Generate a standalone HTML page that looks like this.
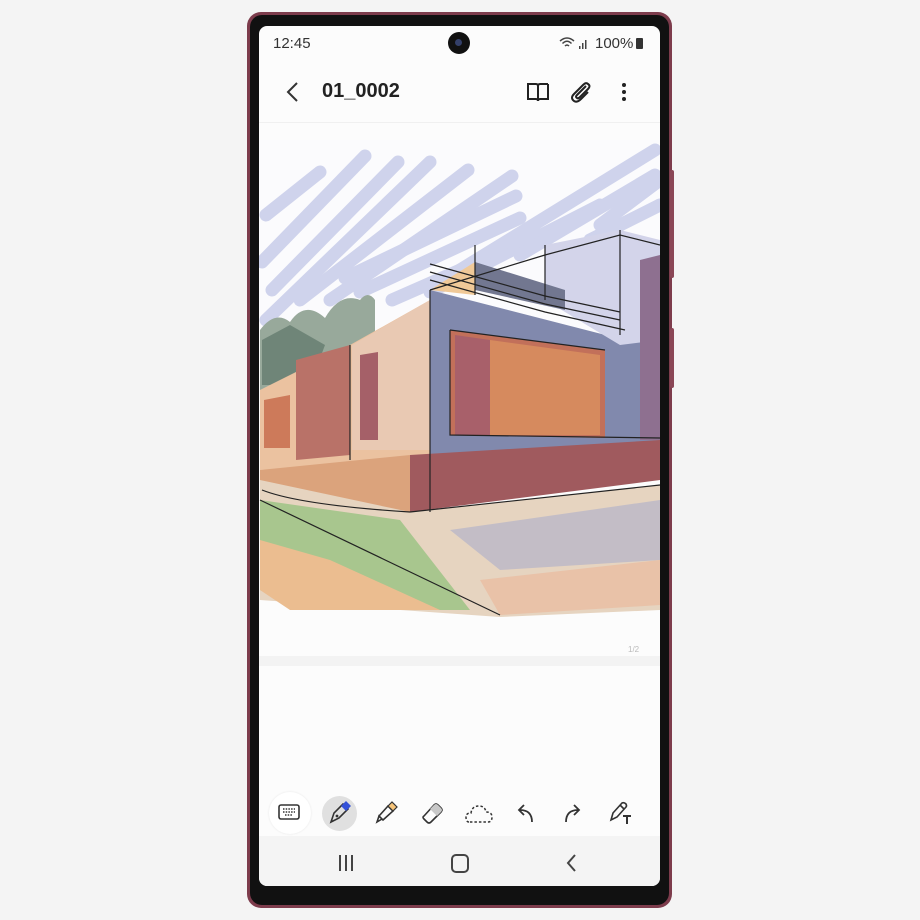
<!DOCTYPE html>
<html><head><meta charset="utf-8"><style>
html,body{margin:0;padding:0;background:#f4f4f4;width:920px;height:920px;overflow:hidden;font-family:"Liberation Sans",sans-serif}
.abs{position:absolute}
</style></head><body>
<div class="abs" style="left:247px;top:12px;width:425px;height:896px;border-radius:14px;background:#7d3c4c"></div>
<div class="abs" style="left:250px;top:15px;width:419px;height:890px;border-radius:12px;background:#111"></div>
<div class="abs" style="left:670px;top:170px;width:4px;height:108px;background:#8a4656;border-radius:2px"></div>
<div class="abs" style="left:670px;top:328px;width:4px;height:60px;background:#8a4656;border-radius:2px"></div>
<div class="abs" style="left:259px;top:26px;width:401px;height:860px;border-radius:8px;background:#fcfcfc;overflow:hidden">
  <div class="abs" style="left:14px;top:9px;font-size:15px;color:#333">12:45</div>
  <div class="abs" style="left:189px;top:6px;width:22px;height:22px;border-radius:50%;background:#111"></div>
  <div class="abs" style="left:196px;top:13px;width:7px;height:7px;border-radius:50%;background:#34406a"></div>
  <svg class="abs" style="left:300px;top:10px" width="30" height="14" viewBox="0 0 30 14">
    <path d="M1 5 Q8 -1 15 5 M3.5 7.5 Q8 3 12.5 7.5 M6 10 Q8 8 10 10" stroke="#444" stroke-width="1.5" fill="none"/>
    <rect x="20" y="10" width="1.5" height="3" fill="#444"/><rect x="23" y="7" width="1.5" height="6" fill="#444"/><rect x="26" y="4" width="1.5" height="9" fill="#444"/>
  </svg>
  <div class="abs" style="left:336px;top:9px;font-size:15px;color:#333">100%</div>
  <div class="abs" style="left:377px;top:12px;width:7px;height:11px;background:#333;border-radius:1px"></div>
  <svg class="abs" style="left:26px;top:55px" width="16" height="22"><path d="M12 2 L3 11 L12 20" stroke="#333" stroke-width="2" fill="none"/></svg>
  <div class="abs" style="left:63px;top:54px;font-size:20px;font-weight:bold;color:#222">01_0002</div>
  <svg class="abs" style="left:267px;top:55px" width="24" height="22"><path d="M2 3 H10 Q12 3 12 5 V20 Q12 18 10 18 H2 Z M22 3 H14 Q12 3 12 5 M22 3 V18 H14 Q12 18 12 20" stroke="#222" stroke-width="2" fill="none"/></svg>
  <svg class="abs" style="left:310px;top:54px" width="24" height="24"><path d="M17 6 L8 15 Q6 17 8 18 Q9 19 11 17 L19 9 Q22 6 19 4 Q17 2 14 5 L5 14 Q1 18 5 21 Q8 23 12 19 L19 12" stroke="#222" stroke-width="2" fill="none"/></svg>
  <div class="abs" style="left:363px;top:57px;width:4px;height:4px;border-radius:50%;background:#222"></div>
  <div class="abs" style="left:363px;top:64px;width:4px;height:4px;border-radius:50%;background:#222"></div>
  <div class="abs" style="left:363px;top:71px;width:4px;height:4px;border-radius:50%;background:#222"></div>
  <div class="abs" style="left:0;top:96px;width:401px;height:1px;background:#f0f0f0"></div>
  <svg class="abs" style="left:0;top:0" width="401" height="640" viewBox="259 26 401 640">
    <rect x="259" y="140" width="401" height="190" fill="#fbfbfd"/>
    <g stroke="#cfd3ec" stroke-width="13" stroke-linecap="round" fill="none">
      <path d="M266 215 L320 172"/><path d="M262 262 L365 156"/><path d="M272 290 L398 162"/>
      <path d="M266 320 L430 162"/><path d="M300 300 L468 170"/><path d="M330 300 L512 176"/>
      <path d="M345 278 L516 196"/><path d="M360 292 L520 218"/><path d="M392 300 L540 235"/>
      <path d="M430 292 L600 205"/><path d="M460 270 L655 150"/><path d="M520 255 L655 175"/>
      <path d="M590 240 L660 205"/><path d="M600 225 L660 180"/>
    </g>
    <path d="M260 330 Q275 310 290 322 Q305 300 325 318 Q340 292 360 300 Q368 290 375 300 L375 400 L260 400 Z" fill="#98a99b"/>
    <path d="M262 340 L290 325 L325 345 L310 385 L262 385 Z" fill="#6f8578"/>
    <polygon points="260,390 350,345 430,300 430,465 260,470" fill="#ebc2a0"/>
    <polygon points="296,360 350,345 350,455 296,460" fill="#b97268"/>
    <polygon points="352,345 430,300 430,450 352,450" fill="#e9c9b3"/>
    <polygon points="360,355 378,352 378,440 360,440" fill="#a56068"/>
    <polygon points="264,400 290,395 290,448 264,448" fill="#cd7a5a"/>
    <polygon points="430,290 625,340 660,330 660,465 430,460" fill="#8189ad"/>
    <polygon points="545,245 620,230 660,240 660,340 620,345 545,300" fill="#d3d4ea"/>
    <polygon points="475,262 565,290 565,310 475,290" fill="#727790"/>
    <polygon points="430,290 475,262 475,295" fill="#f0c998"/>
    <polygon points="450,330 605,350 605,438 450,435" fill="#c2705a"/>
    <polygon points="490,340 600,355 600,435 490,435" fill="#d68a5e"/>
    <polygon points="455,335 490,340 490,435 455,435" fill="#a8606a"/>
    <polygon points="640,260 660,255 660,440 640,440" fill="#8e7090"/>
    <polygon points="260,470 410,455 410,512 260,500" fill="#dba37c"/>
    <polygon points="410,455 660,440 660,480 410,512" fill="#a05a5e"/>
    <polygon points="260,480 410,512 660,485 660,610 500,617 260,600" fill="#e6d4c0"/>
    <polygon points="260,500 400,520 470,610 300,610 260,590" fill="#a8c68e"/>
    <polygon points="260,540 330,560 440,610 290,610 260,590" fill="#ebbd90"/>
    <polygon points="450,530 660,500 660,560 500,570" fill="#c3bdc6"/>
    <polygon points="480,580 660,560 660,605 500,615" fill="#e9c2a8"/>
    <g stroke="#222" stroke-width="1.2" fill="none">
      <path d="M430 290 L430 512"/><path d="M410 512 Q300 505 262 490"/><path d="M410 512 L660 485"/>
      <path d="M430 290 L545 255 L620 235 L660 245"/><path d="M260 500 L500 615"/>
      <path d="M450 330 L605 350 M450 330 L450 435 L660 438"/><path d="M350 345 L350 460"/>
      <path d="M430 280 L545 312 L625 330 M430 272 L545 304 L620 320 M430 264 L545 296 L620 312"/>
      <path d="M620 230 L620 335 M545 245 L545 300 M475 245 L475 295"/>
    </g>
    <text x="628" y="652" font-size="8" fill="#bbb" font-family="Liberation Sans">1/2</text>
    <rect x="259" y="656" width="401" height="10" fill="#f3f3f3"/>
  </svg>
  <div class="abs" style="left:10px;top:766px;width:42px;height:42px;border-radius:50%;background:#fff;box-shadow:0 0 2px #e6e6e6"></div>
  <svg class="abs" style="left:19px;top:777px" width="24" height="20"><rect x="1" y="2" width="20" height="14" rx="2" stroke="#333" stroke-width="1.6" fill="none"/><path d="M5 6 H17 M5 9 H17 M7 12 H15" stroke="#333" stroke-width="1.4" stroke-dasharray="1.5 1.2"/></svg>
  <div class="abs" style="left:63px;top:770px;width:35px;height:35px;border-radius:50%;background:#e0e0e0"></div>
  <svg class="abs" style="left:68px;top:774px" width="26" height="26"><path d="M4 22 L7 13 L16 4 L21 9 L12 18 Z" stroke="#333" stroke-width="1.6" fill="none"/><path d="M14 6 L19 1 L24 6 L19 11 Z" fill="#3552d8"/><circle cx="10" cy="16" r="1.4" fill="#333"/></svg>
  <svg class="abs" style="left:114px;top:774px" width="26" height="26"><path d="M4 22 L6 16 L9 19 Z M6 16 L15 6 L20 11 L10 20 Z" stroke="#333" stroke-width="1.6" fill="none"/><path d="M15 6 L19 2 L24 7 L20 11 Z" fill="#f7c57a" stroke="#333" stroke-width="1.2"/></svg>
  <svg class="abs" style="left:160px;top:774px" width="26" height="26"><path d="M5 16 L15 5 Q17 3 19 5 L22 8 Q24 10 22 12 L12 22 Q10 24 8 22 L5 19 Q3 17 5 16 Z" stroke="#333" stroke-width="1.6" fill="none"/><path d="M15 5 Q17 3 19 5 L22 8 Q24 10 22 12 L18 16 L11 9 Z" fill="#c8c8c8"/></svg>
  <svg class="abs" style="left:206px;top:776px" width="28" height="22"><path d="M4 20 Q1 20 1 15 Q1 11 6 11 Q7 4 14 4 Q20 4 21 10 Q27 10 27 15 Q27 20 23 20 Z" stroke="#333" stroke-width="1.5" stroke-dasharray="2.5 2" fill="none"/></svg>
  <svg class="abs" style="left:255px;top:776px" width="24" height="22"><path d="M18 20 Q18 8 6 8 M10 3 L5 8 L10 13" stroke="#333" stroke-width="1.8" fill="none"/></svg>
  <svg class="abs" style="left:301px;top:776px" width="24" height="22"><path d="M6 20 Q6 8 18 8 M14 3 L19 8 L14 13" stroke="#333" stroke-width="1.8" fill="none"/></svg>
  <svg class="abs" style="left:349px;top:774px" width="26" height="26"><path d="M3 20 L5 13 L14 3 Q16 2 18 4 Q19 6 18 7 L9 17 Z M12 5 L16 9" stroke="#333" stroke-width="1.6" fill="none"/><path d="M15 16 H23 M19 16 V24" stroke="#333" stroke-width="2"/></svg>
  <div class="abs" style="left:0;top:810px;width:401px;height:50px;background:#f4f4f4"></div>
  <div class="abs" style="left:80px;top:829px;width:2px;height:16px;background:#444"></div>
  <div class="abs" style="left:86px;top:829px;width:2px;height:16px;background:#444"></div>
  <div class="abs" style="left:92px;top:829px;width:2px;height:16px;background:#444"></div>
  <div class="abs" style="left:192px;top:828px;width:14px;height:15px;border:2px solid #444;border-radius:5px"></div>
  <svg class="abs" style="left:306px;top:827px" width="14" height="20"><path d="M10 2 L3 10 L10 18" stroke="#444" stroke-width="2" fill="none"/></svg>
</div>
</body></html>
